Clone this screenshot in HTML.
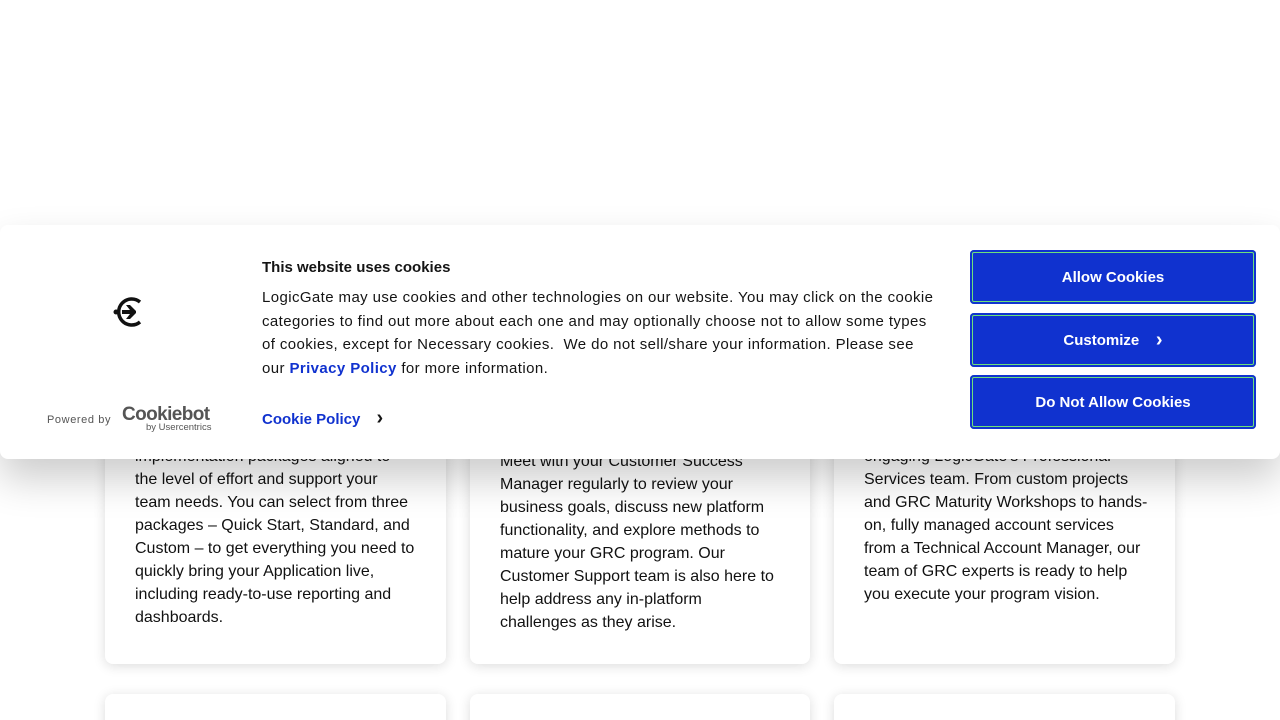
<!DOCTYPE html>
<html><head><style>
html,body{margin:0;width:1280px;height:720px;overflow:hidden}
body{background:#fff;font-family:"Liberation Sans",sans-serif;position:relative}
.card{position:absolute;background:#fff;border-radius:8px;box-shadow:0 2px 12px rgba(0,0,0,.14)}
.card p{position:absolute;margin:0;font-size:16px;line-height:23px;color:#111;white-space:nowrap}
#banner{position:absolute;left:0;top:225px;width:1280px;height:234px;background:#fff;border-radius:8px;box-shadow:0 20px 40px rgba(0,0,0,.2)}
.btn{position:absolute;left:970px;width:286px;height:54px;background:#1032cf;border-radius:4px;color:#fff;font-weight:bold;font-size:15px;display:flex;align-items:center;justify-content:center;box-shadow:inset 0 0 0 2px #1032cf,inset 0 0 0 3px #6ee07a}
</style></head><body>
<div class="card" style="left:105px;top:400px;width:341px;height:264px"><p style="left:30px;top:45px">implementation packages aligned to<br>the level of effort and support your<br>team needs. You can select from three<br>packages – Quick Start, Standard, and<br>Custom – to get everything you need to<br>quickly bring your Application live,<br>including ready-to-use reporting and<br>dashboards.</p></div>
<div class="card" style="left:470px;top:400px;width:340px;height:264px"><p style="left:30px;top:50px">Meet with your Customer Success<br>Manager regularly to review your<br>business goals, discuss new platform<br>functionality, and explore methods to<br>mature your GRC program. Our<br>Customer Support team is also here to<br>help address any in-platform<br>challenges as they arise.</p></div>
<div class="card" style="left:834px;top:400px;width:341px;height:264px"><p style="left:30px;top:45px">engaging LogicGate's Professional<br>Services team. From custom projects<br>and GRC Maturity Workshops to hands-<br>on, fully managed account services<br>from a Technical Account Manager, our<br>team of GRC experts is ready to help<br>you execute your program vision.</p></div>
<div class="card" style="left:105px;top:694px;width:341px;height:60px"></div>
<div class="card" style="left:470px;top:694px;width:340px;height:60px"></div>
<div class="card" style="left:834px;top:694px;width:341px;height:60px"></div>
<div id="banner">
<svg style="position:absolute;left:112px;top:71px" width="34" height="32" viewBox="0 0 34 32"><path d="M28 6A13 13 0 1 0 28 26" fill="none" stroke="#111" stroke-width="3.5"/><circle cx="4" cy="16" r="2.5" fill="#111"/><path d="M10 14h8l-4-5h4l6 6v2l-6 6h-4l4-5h-8z" fill="#111"/></svg>
<div style="position:absolute;left:47px;top:189px;font-size:11px;color:#555;letter-spacing:.6px">Powered by</div>
<div style="position:absolute;left:122px;top:179px;font-size:19px;font-weight:bold;color:#555;letter-spacing:-.6px">Cookiebot</div>
<div style="position:absolute;left:146px;top:197px;font-size:9.5px;color:#555">by Usercentrics</div>
<div style="position:absolute;left:262px;top:34px;font-size:15px;font-weight:bold;color:#141414">This website uses cookies</div>
<div style="position:absolute;left:262px;top:61px;font-size:15px;line-height:23.5px;color:#141414;letter-spacing:.4px;white-space:nowrap">LogicGate may use cookies and other technologies on our website. You may click on the cookie<br>categories to find out more about each one and may optionally choose not to allow some types<br>of cookies, except for Necessary cookies.&nbsp; We do not sell/share your information. Please see<br>our <b style="color:#1032cf">Privacy Policy</b> for more information.</div>
<div style="position:absolute;left:262px;top:186px;font-size:15px;font-weight:bold;color:#1032cf">Cookie Policy <span style="color:#141414;margin-left:12px;font-size:20px;line-height:15px">&#x203A;</span></div>
<div class="btn" style="top:25px">Allow Cookies</div>
<div class="btn" style="top:88px">Customize&nbsp;&nbsp;&nbsp;&nbsp;<span style="font-size:20px">&#x203A;</span></div>
<div class="btn" style="top:150px">Do Not Allow Cookies</div>
</div>
</body></html>
